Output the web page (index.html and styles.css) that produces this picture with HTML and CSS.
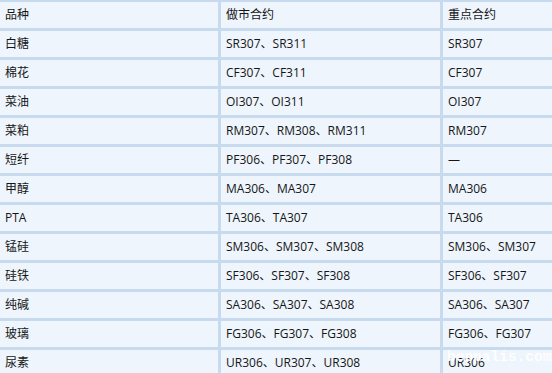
FILE: index.html
```html
<!DOCTYPE html>
<html lang="zh-CN">
<head>
<meta charset="utf-8">
<title>合约表</title>
<link rel="stylesheet" href="styles.css">
</head>
<body>
<div class="page">
  <table class="grid">
    <colgroup>
      <col class="c1"><col class="c2"><col class="c3">
    </colgroup>
    <tbody>
      <tr><td>品种</td><td>做市合约</td><td>重点合约</td></tr>
      <tr><td>白糖</td><td>SR307、SR311</td><td>SR307</td></tr>
      <tr><td>棉花</td><td>CF307、CF311</td><td>CF307</td></tr>
      <tr><td>菜油</td><td>OI307、OI311</td><td>OI307</td></tr>
      <tr><td>菜粕</td><td>RM307、RM308、RM311</td><td>RM307</td></tr>
      <tr><td>短纤</td><td>PF306、PF307、PF308</td><td>—</td></tr>
      <tr><td>甲醇</td><td>MA306、MA307</td><td>MA306</td></tr>
      <tr><td>PTA</td><td>TA306、TA307</td><td>TA306</td></tr>
      <tr><td>锰硅</td><td>SM306、SM307、SM308</td><td>SM306、SM307</td></tr>
      <tr><td>硅铁</td><td>SF306、SF307、SF308</td><td>SF306、SF307</td></tr>
      <tr><td>纯碱</td><td>SA306、SA307、SA308</td><td>SA306、SA307</td></tr>
      <tr><td>玻璃</td><td>FG306、FG307、FG308</td><td>FG306、FG307</td></tr>
      <tr><td>尿素</td><td>UR306、UR307、UR308</td><td>UR306</td></tr>
    </tbody>
  </table>
  <div class="watermark">beppalis.com</div>
</div>
</body>
</html>
```

FILE: styles.css
```css
html, body {
  margin: 0;
  padding: 0;
  background: #eef5fc;
  overflow: hidden;
}

.page {
  position: relative;
  width: 552px;
  height: 373px;
  overflow: hidden;
}

.grid {
  margin: -1px 0 0 -3px;
  table-layout: fixed;
  width: 668px;
  border-collapse: separate;
  border-spacing: 3px;
  background: #c8daee;
  font-family: "Open Sans", "Noto Sans CJK SC", sans-serif;
  font-size: 12px;
  color: #161616;
}

.c1 { width: 218px; }
.c2 { width: 219px; }
.c3 { width: 219px; }

.grid td {
  box-sizing: border-box;
  height: 26px;
  padding: 0 5px;
  line-height: 26px;
  background: #eef5fc;
  white-space: nowrap;
  vertical-align: middle;
}

.watermark {
  position: absolute;
  left: 447px;
  top: 350px;
  font-family: "Liberation Mono", monospace;
  font-size: 14.5px;
  font-weight: bold;
  line-height: 14.5px;
  color: #ffffff;
  opacity: 0.95;
}
```
